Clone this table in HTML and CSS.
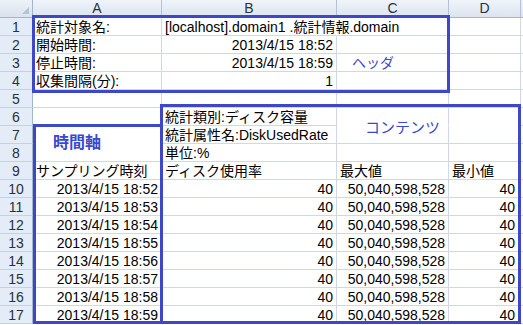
FILE: index.html
```html
<!DOCTYPE html>
<html lang="ja">
<head>
<meta charset="utf-8">
<title>統計情報</title>
<link rel="stylesheet" href="styles.css">
</head>
<body>
<div class="sheet">
  <div class="grid">
    <div class="corner"><span class="tri"></span></div>
    <div class="ch">A</div><div class="ch">B</div><div class="ch">C</div><div class="ch">D</div><div class="ch"></div>

    <div class="rh">1</div><div class="c">統計対象名:</div><div class="c nr">[localhost].domain1 .統計情報.domain</div><div class="c"></div><div class="c"></div><div class="c"></div>
    <div class="rh">2</div><div class="c">開始時間:</div><div class="c r">2013/4/15 18:52</div><div class="c"></div><div class="c"></div><div class="c"></div>
    <div class="rh">3</div><div class="c">停止時間:</div><div class="c r">2013/4/15 18:59</div><div class="c"></div><div class="c"></div><div class="c"></div>
    <div class="rh">4</div><div class="c">収集間隔(分):</div><div class="c r">1</div><div class="c"></div><div class="c"></div><div class="c"></div>
    <div class="rh">5</div><div class="c"></div><div class="c"></div><div class="c"></div><div class="c"></div><div class="c"></div>
    <div class="rh">6</div><div class="c"></div><div class="c">統計類別:ディスク容量</div><div class="c nb"></div><div class="c nb"></div><div class="c"></div>
    <div class="rh">7</div><div class="c nb"></div><div class="c">統計属性名:DiskUsedRate</div><div class="c"></div><div class="c"></div><div class="c"></div>
    <div class="rh">8</div><div class="c"></div><div class="c">単位:%</div><div class="c"></div><div class="c"></div><div class="c"></div>
    <div class="rh">9</div><div class="c">サンプリング時刻</div><div class="c">ディスク使用率</div><div class="c">最大値</div><div class="c">最小値</div><div class="c"></div>
    <div class="rh">10</div><div class="c r">2013/4/15 18:52</div><div class="c r">40</div><div class="c r">50,040,598,528</div><div class="c r d">40</div><div class="c"></div>
    <div class="rh">11</div><div class="c r">2013/4/15 18:53</div><div class="c r">40</div><div class="c r">50,040,598,528</div><div class="c r d">40</div><div class="c"></div>
    <div class="rh">12</div><div class="c r">2013/4/15 18:54</div><div class="c r">40</div><div class="c r">50,040,598,528</div><div class="c r d">40</div><div class="c"></div>
    <div class="rh">13</div><div class="c r">2013/4/15 18:55</div><div class="c r">40</div><div class="c r">50,040,598,528</div><div class="c r d">40</div><div class="c"></div>
    <div class="rh">14</div><div class="c r">2013/4/15 18:56</div><div class="c r">40</div><div class="c r">50,040,598,528</div><div class="c r d">40</div><div class="c"></div>
    <div class="rh">15</div><div class="c r">2013/4/15 18:57</div><div class="c r">40</div><div class="c r">50,040,598,528</div><div class="c r d">40</div><div class="c"></div>
    <div class="rh">16</div><div class="c r">2013/4/15 18:58</div><div class="c r">40</div><div class="c r">50,040,598,528</div><div class="c r d">40</div><div class="c"></div>
    <div class="rh">17</div><div class="c r">2013/4/15 18:59</div><div class="c r">40</div><div class="c r">50,040,598,528</div><div class="c r d">40</div><div class="c"></div>
  </div>

  <div class="box box-head"></div>
  <div class="box box-time"></div>
  <div class="box box-content"></div>
  <div class="note note-head">ヘッダ</div>
  <div class="note note-time">時間軸</div>
  <div class="note note-content">コンテンツ</div>
</div>
</body>
</html>
```

FILE: styles.css
```css
html, body {
  margin: 0;
  padding: 0;
  background: #ffffff;
  overflow: hidden;
}

.sheet {
  position: relative;
  width: 523px;
  height: 325px;
  overflow: hidden;
  font-family: "Liberation Sans", "Noto Sans CJK JP", sans-serif;
  font-size: 14px;
  color: #000;
}

.grid {
  display: grid;
  grid-template-columns: 33px 129px 175px 112px 72px 40px;
  grid-template-rows: 18px repeat(18, 18px);
}

.grid > div {
  box-sizing: border-box;
  white-space: nowrap;
  min-width: 0;
}

.corner {
  position: relative;
  background: linear-gradient(#eef2f8, #d9e2ee);
  border-right: 1px solid #9eb6ce;
  border-bottom: 1px solid #9eb6ce;
}

.tri {
  position: absolute;
  right: 3px;
  bottom: 3px;
  width: 0;
  height: 0;
  border-left: 7px solid transparent;
  border-bottom: 7px solid #b4c4d8;
}

.ch {
  background: linear-gradient(#f0f4fa, #dbe4f0);
  border-right: 1px solid #b3c3d7;
  border-bottom: 1px solid #9eb6ce;
  text-align: center;
  line-height: 17px;
  color: #27323e;
}

.rh {
  background: #e4ecf7;
  border-right: 1px solid #9eb6ce;
  border-bottom: 1px solid #c5d1e0;
  text-align: center;
  padding-top: 1px;
  line-height: 17px;
  color: #27323e;
}

.c {
  border-right: 1px solid #d0d7e5;
  border-bottom: 1px solid #d0d7e5;
  padding: 1px 3px 0;
  line-height: 17px;
}

.r {
  text-align: right;
}

.d {
  padding-right: 5px;
}

.nr {
  border-right-color: transparent !important;
}

.nb {
  border-bottom-color: transparent !important;
}

.box {
  position: absolute;
  box-sizing: border-box;
  border: 3px solid #3f47c9;
}

.box-head {
  left: 32px;
  top: 15px;
  width: 418px;
  height: 78px;
}

.box-time {
  left: 33px;
  top: 124px;
  width: 130px;
  height: 200px;
}

.box-content {
  left: 160px;
  top: 104px;
  width: 361px;
  height: 220px;
}

.note {
  position: absolute;
  font-family: "Noto Sans CJK JP", sans-serif;
  color: #3a48d0;
  white-space: nowrap;
  line-height: 1;
}

.note-head {
  left: 352px;
  top: 55px;
  font-size: 14px;
}

.note-time {
  left: 53px;
  top: 133px;
  font-size: 16px;
  font-weight: bold;
}

.note-content {
  left: 365px;
  top: 119px;
  font-size: 15px;
}
```
